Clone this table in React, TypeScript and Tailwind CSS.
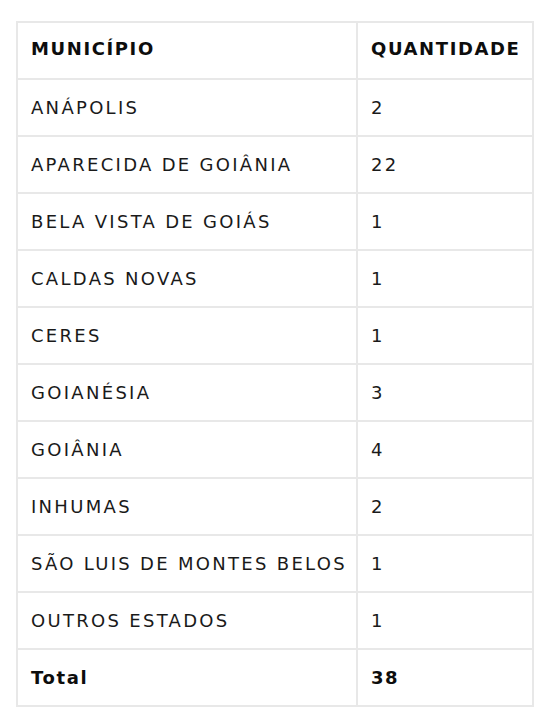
import React from "react";

const rows: [string, string][] = [
  ["ANÁPOLIS", "2"],
  ["APARECIDA DE GOIÂNIA", "22"],
  ["BELA VISTA DE GOIÁS", "1"],
  ["CALDAS NOVAS", "1"],
  ["CERES", "1"],
  ["GOIANÉSIA", "3"],
  ["GOIÂNIA", "4"],
  ["INHUMAS", "2"],
  ["SÃO LUIS DE MONTES BELOS", "1"],
  ["OUTROS ESTADOS", "1"],
];

const cell = "border-2 border-[#e8e8e8] pl-[13px] text-[18px]";
const body = cell + " font-normal tracking-[2.3px] text-[#1a1a1a]";
const head = cell + " font-bold tracking-[1.6px] text-[#0d0d0d]";

export default function App() {
  return (
    <div
      className="w-[555px] h-[721px] bg-white pt-[21px] pl-[16px]"
      style={{ fontFamily: '"DejaVu Sans", "Open Sans", sans-serif' }}
    >
      <table className="w-[518px] border-collapse border-2 border-[#e8e8e8] table-fixed">
        <colgroup>
          <col className="w-[340px]" />
          <col />
        </colgroup>
        <tbody>
          <tr className="h-[57px]">
            <td className={head + " pb-[4px]"}>MUNICÍPIO</td>
            <td className={head + " pb-[4px]"}>QUANTIDADE</td>
          </tr>
          {rows.map(([m, q]) => (
            <tr key={m} className="h-[57px]">
              <td className={body}>{m}</td>
              <td className={body}>{q}</td>
            </tr>
          ))}
          <tr className="h-[57px]">
            <td className={head}>Total</td>
            <td className={head}>38</td>
          </tr>
        </tbody>
      </table>
    </div>
  );
}
